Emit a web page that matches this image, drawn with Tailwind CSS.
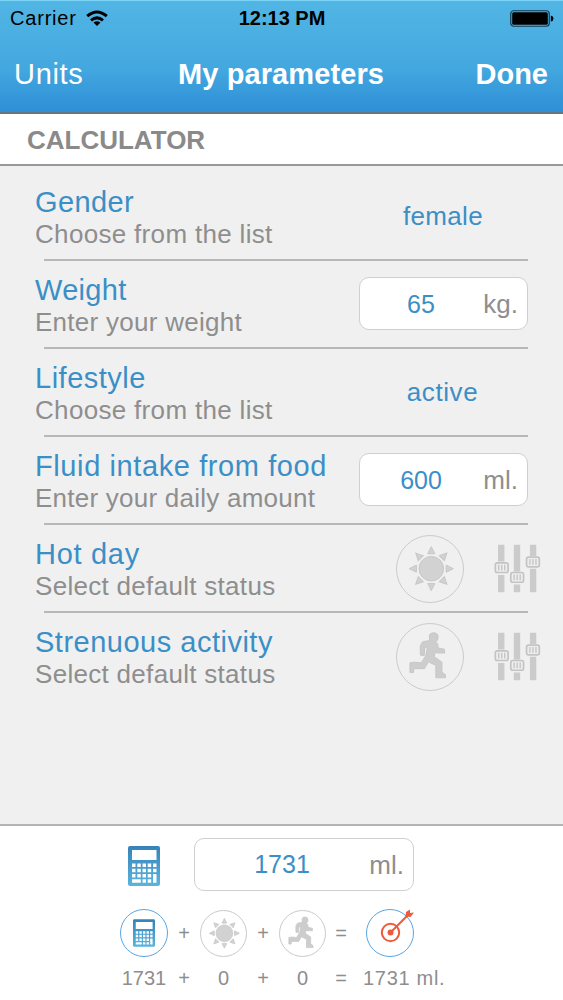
<!DOCTYPE html>
<html lang="en">
    <head>
        <meta charset="utf-8">
        <meta name="viewport" content="width=device-width, initial-scale=1">

        <title>My parameters</title>

        <script src="https://cdn.jsdelivr.net/npm/@tailwindcss/browser@4"></script>
    </head>

    <body class="flex flex-col w-[563px] h-[1000px] overflow-hidden bg-[#f0f0f0] font-['Liberation_Sans',Arial,sans-serif]">
        <svg class="absolute w-0 h-0" xmlns="http://www.w3.org/2000/svg">
            <linearGradient id="blue" x1="0" y1="0" x2="0" y2="1">
                <stop offset="0" stop-color="#3583b9"/>
                <stop offset="1" stop-color="#5ab4de"/>
            </linearGradient>
            <symbol id="sun" viewBox="33 30 204 204">
                <circle cx="139" cy="131" r="38"/>
                <path id="ray" d="M139 63l11 22h-22z"/>
                <use href="#ray" transform="rotate(45 139 131)"/>
                <use href="#ray" transform="rotate(90 139 131)"/>
                <use href="#ray" transform="rotate(135 139 131)"/>
                <use href="#ray" transform="rotate(180 139 131)"/>
                <use href="#ray" transform="rotate(225 139 131)"/>
                <use href="#ray" transform="rotate(270 139 131)"/>
                <use href="#ray" transform="rotate(315 139 131)"/>
            </symbol>
            <symbol id="runner" viewBox="33 40 204 204">
                <path d="M133 76Q134 67 147 67Q160 68 160 80Q160 92 152 96L159 101L160 114L180 118V130L150 129L148 141L172 158V189L183 197V206H153V168L130 157L118 178H85L84 190H73V160L86 158L108 160L122 138L127 112H119L117 138L105 136V108L112 95L134 91Z" stroke-linejoin="round"/>
            </symbol>
            <symbol id="calc" viewBox="0 0 32 40">
                <path fill-rule="evenodd" d="M2 0H30Q32 0 32 2V38Q32 40 30 40H2Q0 40 0 38V2Q0 0 2 0ZM4 4V14H28.500V4ZM4 17.500V21H7.500V17.500ZM9.300 17.500V21H12.800V17.500ZM14.500 17.500V21H18V17.500ZM19.700 17.500V21H23.200V17.500ZM25 17.500V21H28.500V17.500ZM4 22.700V26.200H7.500V22.700ZM9.300 22.700V26.200H12.800V22.700ZM14.500 22.700V26.200H18V22.700ZM19.700 22.700V26.200H23.200V22.700ZM25 22.700V26.200H28.500V22.700ZM4 28V31.500H7.500V28ZM9.300 28V31.500H12.800V28ZM14.500 28V31.500H18V28ZM19.700 28V31.500H23.200V28ZM25 28V36.800H28.500V28ZM4 33.300V36.800H12.800V33.300ZM14.500 33.300V36.800H18V33.300ZM19.700 33.300V36.800H23.200V33.300Z"/>
            </symbol>
            <symbol id="sliders" viewBox="328 52 140 152">
                <path fill="#cbcbcb" d="M340 57h19v50h-19zM340 147h19v52h-19zM387 57h19v80h-19zM387 176h19v23h-19zM435 57h19v34h-19zM435 129h19v70h-19z"/>
                <g fill="#eeeeee" stroke="#c3c3c3" stroke-width="5">
                    <rect x="332" y="111" width="38" height="29" rx="6"/>
                    <rect x="378" y="140" width="38" height="29" rx="6"/>
                    <rect x="425" y="94" width="38" height="29" rx="6"/>
                </g>
                <path fill="none" stroke="#c3c3c3" stroke-width="4" d="M342 117v17M351 117v17M360 117v17M388 146v17M397 146v17M406 146v17M435 100v17M444 100v17M453 100v17"/>
            </symbol>
        </svg>

        <header class="h-[114px] border-b-2 border-[#66757f] bg-linear-to-b from-[#51b6e4] via-[#44a8e0] via-60% to-[#2e8fd6] shadow-[inset_0_1px_0_#7bd3f8]">
            <div class="flex items-center justify-between h-9 pl-[10px] pr-[9px] text-black">
                <div class="flex items-center gap-[9px] w-[150px]">
                    <span class="text-[20px] tracking-[0.8px]">Carrier</span>
                    <svg class="w-[22px] h-[17px]" viewBox="0 0 22 17">
                        <g fill="none" stroke="#000" stroke-width="3">
                            <path d="M1.200 6.200Q11 -2.200 20.800 6.200"/>
                            <path d="M5 10.300Q11 5.400 17 10.300"/>
                        </g>
                        <path d="M7.500 12.500Q11 10 14.500 12.500L11 16z"/>
                    </svg>
                </div>
                <span class="text-[20px] font-bold">12:13 PM</span>
                <div class="flex justify-end w-[150px]">
                    <svg class="w-[44px] h-[17px]" viewBox="0 0 44 17">
                        <rect x=".75" y=".75" width="38.500" height="15.500" rx="3" fill="none" stroke="#123a50" stroke-width="1.200"/>
                        <rect x="2.200" y="2.200" width="35.600" height="12.600" rx="1.500"/>
                        <path d="M40.800 5.500Q43.500 6 43.500 8.500T40.800 11.500z"/>
                    </svg>
                </div>
            </div>
            <nav class="flex items-center justify-between h-[76px] pt-[2px] pl-[14px] pr-[15px] text-[29px] text-white">
                <a class="w-[100px] tracking-[0.7px]">Units</a>
                <h1 class="font-bold tracking-[0.1px]">My parameters</h1>
                <a class="w-[100px] text-right font-bold">Done</a>
            </nav>
        </header>

        <h2 class="flex items-center h-[52px] pt-[2px] pl-[27px] border-b-2 border-[#999] bg-white text-[26px] font-bold text-[#8a8a8a]">CALCULATOR</h2>

        <main class="flex-1 pt-[7px] text-[26px] leading-8 text-[#8e8e8e]">
            <section class="flex items-center h-[86px] pl-[35px]">
                <div class="w-[324px] pt-1">
                    <h3 class="text-[29px] leading-8 tracking-[0.4px] text-[#3b8fc7]">Gender</h3>
                    <p class="tracking-[0.32px]">Choose from the list</p>
                </div>
                <span class="w-[168px] text-center tracking-[0.3px] text-[#3b8fc7]">female</span>
            </section>
            <div class="h-[2px] ml-[44px] mr-[35px] bg-[#b8b8b8]"></div>

            <section class="flex items-center h-[86px] pl-[35px]">
                <div class="w-[324px] pt-1">
                    <h3 class="text-[29px] leading-8 tracking-[0.3px] text-[#3b8fc7]">Weight</h3>
                    <p class="tracking-[0.28px]">Enter your weight</p>
                </div>
                <div class="flex items-center w-[169px] h-[53px] mb-px border border-[#cfcfcf] rounded-[10px] bg-white pr-[9px]">
                    <span class="w-[122px] text-center text-[25px] text-[#3b8fc7]">65</span>
                    <span class="flex-1 pt-px text-right">kg.</span>
                </div>
            </section>
            <div class="h-[2px] ml-[44px] mr-[35px] bg-[#b8b8b8]"></div>

            <section class="flex items-center h-[86px] pl-[35px]">
                <div class="w-[324px] pt-1">
                    <h3 class="text-[29px] leading-8 tracking-[0.5px] text-[#3b8fc7]">Lifestyle</h3>
                    <p class="tracking-[0.32px]">Choose from the list</p>
                </div>
                <span class="w-[167px] text-center tracking-[0.6px] text-[#3b8fc7]">active</span>
            </section>
            <div class="h-[2px] ml-[44px] mr-[35px] bg-[#b8b8b8]"></div>

            <section class="flex items-center h-[86px] pl-[35px]">
                <div class="w-[324px] pt-1">
                    <h3 class="text-[29px] leading-8 tracking-[0.6px] text-[#3b8fc7]">Fluid intake from food</h3>
                    <p class="tracking-[0.24px]">Enter your daily amount</p>
                </div>
                <div class="flex items-center w-[169px] h-[53px] mb-px border border-[#cfcfcf] rounded-[10px] bg-white pr-[9px]">
                    <span class="w-[122px] text-center text-[25px] text-[#3b8fc7]">600</span>
                    <span class="flex-1 pt-px text-right">ml.</span>
                </div>
            </section>
            <div class="h-[2px] ml-[44px] mr-[35px] bg-[#b8b8b8]"></div>

            <section class="flex items-center h-[86px] pl-[35px]">
                <div class="w-[361px] pt-1">
                    <h3 class="text-[29px] leading-8 tracking-[0.7px] text-[#3b8fc7]">Hot day</h3>
                    <p class="tracking-[0.3px]">Select default status</p>
                </div>
                <div class="w-[68px] h-[68px] mt-[2px] border-[1.5px] border-[#cbcbcb] rounded-full">
                    <svg class="w-[66px] h-[66px] fill-[#d2d2d2] stroke-[#c6c6c6] stroke-3"><use href="#sun"/></svg>
                </div>
                <svg class="w-[47px] h-[51px] ml-[30px]"><use href="#sliders"/></svg>
            </section>
            <div class="h-[2px] ml-[44px] mr-[35px] bg-[#b8b8b8]"></div>

            <section class="flex items-center h-[86px] pl-[35px]">
                <div class="w-[361px] pt-1">
                    <h3 class="text-[29px] leading-8 tracking-[0.5px] text-[#3b8fc7]">Strenuous activity</h3>
                    <p class="tracking-[0.3px]">Select default status</p>
                </div>
                <div class="w-[68px] h-[68px] mt-[2px] border-[1.5px] border-[#cbcbcb] rounded-full">
                    <svg class="w-[66px] h-[66px] fill-[#cdcdcd] stroke-[#c6c6c6] stroke-3"><use href="#runner"/></svg>
                </div>
                <svg class="w-[47px] h-[51px] ml-[30px]"><use href="#sliders"/></svg>
            </section>
        </main>

        <footer class="h-[176px] border-t-2 border-[#b4b4b4] bg-white text-[#8e8e8e]">
            <div class="flex items-center pt-3 pl-32 text-[26px]">
                <svg class="w-8 h-10 mt-[2px]" fill="url(#blue)"><use href="#calc"/></svg>
                <div class="flex items-center w-[220px] h-[53px] ml-[34px] border border-[#cfcfcf] rounded-[10px] pr-[9px]">
                    <span class="w-[174px] text-center text-[25px] text-[#3b8fc7]">1731</span>
                    <span class="flex-1 pt-px text-right">ml.</span>
                </div>
            </div>

            <div class="grid grid-cols-[48px_32px_47px_32px_47px_30px_100px] items-center mt-[18px] pl-[120px] text-center text-[20px]">
                <div class="flex items-center justify-center w-12 h-12 border border-[#5aa6e2] rounded-full">
                    <svg class="w-[22px] h-[28px]" fill="url(#blue)"><use href="#calc"/></svg>
                </div>
                <span>+</span>
                <div class="w-[47px] h-[47px] border border-[#cacaca] rounded-full">
                    <svg class="w-[45px] h-[45px] fill-[#d2d2d2] stroke-[#c6c6c6] stroke-3"><use href="#sun"/></svg>
                </div>
                <span>+</span>
                <div class="w-[47px] h-[47px] border border-[#cacaca] rounded-full">
                    <svg class="w-[45px] h-[45px] fill-[#cdcdcd] stroke-[#c6c6c6] stroke-3"><use href="#runner"/></svg>
                </div>
                <span>=</span>
                <svg class="w-[48px] h-[48px] ml-[10px] overflow-visible" viewBox="0 0 48 48" fill="none">
                    <circle cx="24" cy="24" r="23.500" stroke="#5aa6e2"/>
                    <g stroke="#ee5a3a" stroke-width="2">
                        <circle cx="24.500" cy="23.500" r="8.700"/>
                        <circle cx="24.500" cy="23.500" r="2" fill="#ee5a3a"/>
                        <path d="M24.500 23.500L43 5"/>
                    </g>
                    <path fill="#ee5a3a" d="M39.500 7.500L40 3L44 .5V4L48 3.500L44.500 8Z"/>
                </svg>
            </div>

            <div class="grid grid-cols-[48px_32px_47px_32px_47px_30px_100px] items-center mt-[6px] pl-[120px] text-center text-[20px]">
                <span>1731</span>
                <span>+</span>
                <span>0</span>
                <span>+</span>
                <span>0</span>
                <span>=</span>
                <span class="pl-[7px] text-left tracking-[0.7px]">1731 ml.</span>
            </div>
        </footer>
    </body>
</html>
